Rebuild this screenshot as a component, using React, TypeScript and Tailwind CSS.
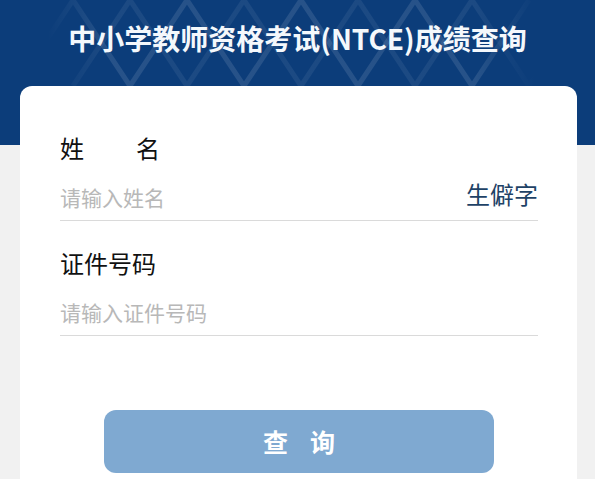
const font = { fontFamily: '"Noto Sans CJK SC", "Noto Sans", sans-serif' };

function HeaderPattern() {
  // faint zigzag behind the title
  const pts: string[] = [];
  for (let i = 0; i < 10; i++) {
    const x = 16 + i * 57;
    pts.push(`${x},${i % 2 === 0 ? 86 : 0}`);
  }
  const pts2 = pts.map((p) => {
    const [x, y] = p.split(",").map(Number);
    return `${x + 57},${y}`;
  });
  return (
    <svg className="absolute inset-x-0 top-0" width="595" height="86" viewBox="0 0 595 86">
      <defs>
        <linearGradient id="fade" x1="0" y1="0" x2="595" y2="0" gradientUnits="userSpaceOnUse">
          <stop offset="0.08" stopColor="#ffffff" stopOpacity="0" />
          <stop offset="0.18" stopColor="#ffffff" stopOpacity="0.11" />
          <stop offset="0.8" stopColor="#ffffff" stopOpacity="0.11" />
          <stop offset="0.9" stopColor="#ffffff" stopOpacity="0" />
        </linearGradient>
      </defs>
      <g stroke="url(#fade)" strokeWidth="5" fill="none">
        <polyline points={pts.join(" ")} />
        <polyline points={pts2.join(" ")} opacity="0.6" />
      </g>
    </svg>
  );
}

export default function App() {
  return (
    <div className="min-h-[479px] w-[595px] overflow-hidden bg-[#f1f1f1]" style={font}>
      <header className="relative h-[145px] bg-[#0c3d7a]">
        <HeaderPattern />
        <h1 className="relative pt-[18px] text-center text-[28px] font-bold leading-[40px] text-[#f4f8fc]">
          中小学教师资格考试(NTCE)成绩查询
        </h1>
      </header>

      <main className="relative ml-[20px] mr-[18px] -mt-[59px] h-[420px] rounded-t-[12px] bg-white pl-[40px] pr-[39px] pt-[46px]">
        <div className="flex h-[32px] w-[100px] items-center justify-between text-[24px] text-[#111]">
          <span>姓</span>
          <span>名</span>
        </div>
        <div className="mt-[12px] flex h-[45px] items-center justify-between border-b border-[#dadada]">
          <span className="text-[21px] text-[#b8b8b8]">请输入姓名</span>
          <span className="-mt-[9px] text-[24px] text-[#1e4266]">生僻字</span>
        </div>

        <div className="mt-[26px] flex h-[32px] items-center text-[24px] text-[#111]">证件号码</div>
        <div className="mt-[12px] flex h-[45px] items-center border-b border-[#dadada]">
          <span className="text-[21px] text-[#b8b8b8]">请输入证件号码</span>
        </div>

        <button
          type="button"
          className="mx-auto mt-[74px] flex h-[63px] w-[390px] items-center justify-center gap-[22px] rounded-[12px] bg-[#7fa9d1] text-[25px] font-bold text-white"
        >
          <span>查</span>
          <span>询</span>
        </button>
      </main>
    </div>
  );
}
